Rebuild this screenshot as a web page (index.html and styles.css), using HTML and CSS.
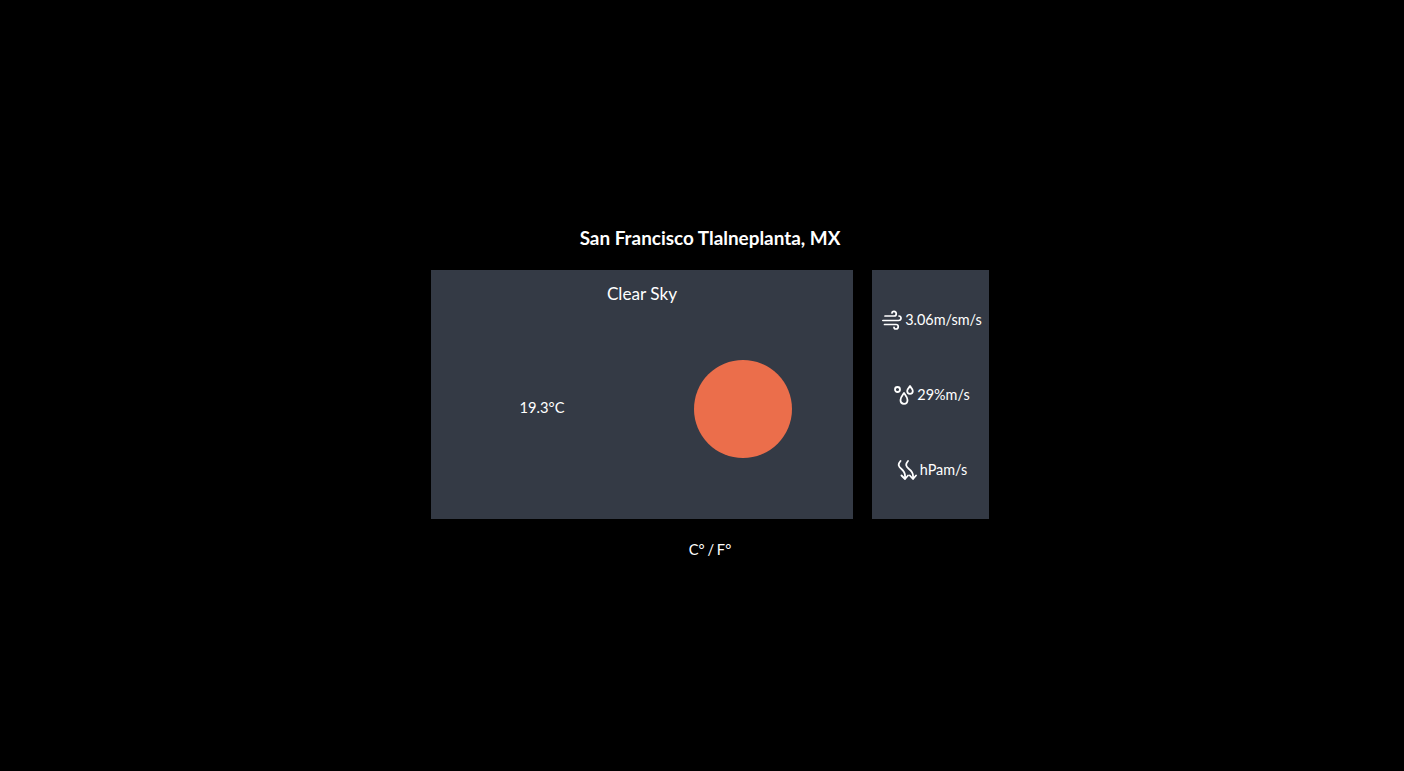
FILE: index.html
```html
<!DOCTYPE html>
<html lang="en">
<head>
<meta charset="utf-8">
<title>Weather</title>
<link rel="stylesheet" href="styles.css">
</head>
<body>
<main class="app">
  <h1 class="city">San Francisco Tlalneplanta, MX</h1>
  <div class="panels">
    <section class="main-card">
      <p class="desc">Clear Sky</p>
      <div class="main-row">
        <p class="temp">19.3°C</p>
        <div class="sun-slot"><div class="sun"></div></div>
      </div>
    </section>
    <aside class="side-card">
      <div class="stat">
        <svg class="icon" viewBox="0 0 20 20" fill="none" stroke="#fff" stroke-width="1.700" stroke-linecap="round" stroke-linejoin="round"><path d="M3 6H12C15 6 15 1.300 12 1.300C10.800 1.300 10 2.100 10 3"/><path d="M0.800 10.500H16.500C19.800 10.500 19.800 6 17 6"/><path d="M2.500 14.500H14C17 14.500 17 19 14 19C12.800 19 12 18.200 12 17.300"/></svg>
        <span>3.06m/sm/s</span>
      </div>
      <div class="stat">
        <svg class="icon" viewBox="0 0 20 20" fill="none" stroke="#fff" stroke-width="1.800" stroke-linejoin="round"><circle cx="3.500" cy="4.500" r="2.500"/><path d="M16 1C17.800 3.300 18.800 4.500 18.800 6C18.800 7.600 17.600 8.800 16 8.800C14.400 8.800 13.200 7.600 13.200 6C13.200 4.500 14.200 3.300 16 1Z"/><path d="M10 8C12 10.800 13.500 12.500 13.500 15C13.500 17.200 12 18.800 10 18.800C8 18.800 6.500 17.200 6.500 15C6.500 12.500 8 10.800 10 8Z"/></svg>
        <span>29%m/s</span>
      </div>
      <div class="stat">
        <svg class="icon" viewBox="0 0 20 20" fill="none" stroke="#fff" stroke-width="1.800" stroke-linecap="round" stroke-linejoin="round"><path d="M3.500 1C0.500 4.500 1.500 6.500 4.500 9C7.500 11.500 8.500 14 8 18"/><path d="M4.500 15.500L8 19L11 15.500"/><path d="M11 1C8 4.500 9 6.500 12 9C15.500 11.500 16.500 14 16 18"/><path d="M12.800 15.500L16 19L19 15.500"/></svg>
        <span>hPam/s</span>
      </div>
    </aside>
  </div>
  <p class="toggle">C° / F°</p>
</main>
</body>
</html>
```
FILE: styles.css
```css
* {
  box-sizing: border-box;
}

html,
body {
  height: 100%;
}

body {
  margin: 0;
  background: #000;
  color: #fff;
  font-family: Lato, "Open Sans", sans-serif;
  font-size: 15px;
}

p,
h1 {
  margin: 0;
}

.app {
  height: 771px;
  padding: 227px 0 0 16px;
  display: flex;
  flex-direction: column;
  align-items: center;
}

.city {
  font-size: 18.9px;
  line-height: 22px;
  font-weight: 700;
  margin-bottom: 21px;
}

.panels {
  display: flex;
  gap: 19px;
  height: 249px;
}

.main-card {
  width: 422px;
  background: #343a45;
  display: flex;
  flex-direction: column;
  align-items: center;
  padding-top: 14px;
}

.desc {
  font-size: 17.2px;
  line-height: 20px;
}

.main-row {
  width: 100%;
  display: flex;
  align-items: center;
  margin-top: 56px;
}

.temp {
  width: 222px;
  text-align: center;
  font-size: 14.7px;
  line-height: 18px;
  position: relative;
  top: -2px;
}

.sun-slot {
  flex: 1;
  display: flex;
  justify-content: center;
  padding-right: 21px;
}

.sun {
  width: 98px;
  height: 98px;
  border-radius: 50%;
  background: #eb6e4b;
}

.side-card {
  width: 117px;
  background: #343a45;
  display: flex;
  flex-direction: column;
  justify-content: space-around;
  align-items: center;
  padding: 12px 0 12px 3px;
}

.stat {
  display: flex;
  align-items: center;
  gap: 3px;
  font-size: 14.4px;
  line-height: 20px;
  white-space: nowrap;
}

.icon {
  width: 20px;
  height: 20px;
  flex: none;
}

.toggle {
  margin-top: 21px;
  font-size: 14.7px;
  word-spacing: -1px;
  line-height: 18px;
}
```
